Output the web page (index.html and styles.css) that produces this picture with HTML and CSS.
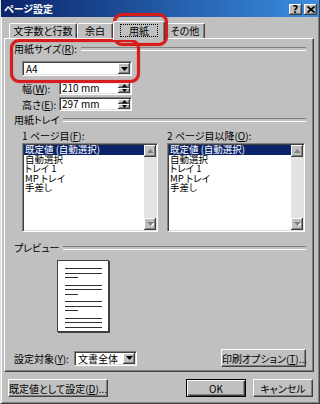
FILE: index.html
```html
<!DOCTYPE html>
<html lang="ja">

<head>
    <meta charset="UTF-8">
    <meta name="viewport" content="width=device-width, initial-scale=1.0">
    <title>ページ設定</title>

    <link rel="stylesheet" href="styles.css">
</head>

<body>
    <div class="dialog">
        <div class="titlebar">
            <span class="title">ページ設定</span>
            <div class="caption-btns">
                <span class="cap-btn">?</span>
                <span class="cap-btn">
                    <svg width="8" height="7" viewBox="0 0 8 7"><path d="M0.5 0.5L7.5 6.5M7.5 0.5L0.5 6.5" stroke="#000" stroke-width="1.7"/></svg>
                </span>
            </div>
        </div>

        <div class="main">
            <div class="tabs">
                <div class="tab tab-chars">文字数と行数</div>
                <div class="tab tab-margin">余白</div>
                <div class="tab tab-paper active"><span class="focus">用紙</span></div>
                <div class="tab tab-other">その他</div>
            </div>

            <div class="panel">
                <!-- 用紙サイズ -->
                <div class="group-head"><span>用紙サイズ(<u>R</u>):</span></div>
                <div class="combo size-combo">
                    <span class="combo-text">A4</span>
                    <span class="drop-btn"><svg width="7" height="4" viewBox="0 0 7 4"><polygon points="0,0 7,0 3.5,4" fill="#000"/></svg></span>
                </div>
                <div class="field field-first">
                    <label>幅(<u>W</u>):</label>
                    <div class="spin">
                        <span class="spin-text">210 mm</span>
                        <span class="spin-btns">
                            <span class="spin-btn"><svg width="5" height="3" viewBox="0 0 5 3"><polygon points="2.5,0 5,3 0,3" fill="#000"/></svg></span>
                            <span class="spin-btn"><svg width="5" height="3" viewBox="0 0 5 3"><polygon points="0,0 5,0 2.5,3" fill="#000"/></svg></span>
                        </span>
                    </div>
                </div>
                <div class="field">
                    <label>高さ(<u>E</u>):</label>
                    <div class="spin">
                        <span class="spin-text">297 mm</span>
                        <span class="spin-btns">
                            <span class="spin-btn"><svg width="5" height="3" viewBox="0 0 5 3"><polygon points="2.5,0 5,3 0,3" fill="#000"/></svg></span>
                            <span class="spin-btn"><svg width="5" height="3" viewBox="0 0 5 3"><polygon points="0,0 5,0 2.5,3" fill="#000"/></svg></span>
                        </span>
                    </div>
                </div>

                <!-- 用紙トレイ -->
                <div class="group-head tray-head"><span>用紙トレイ</span></div>
                <div class="tray">
                    <div class="tray-label">1 ページ目(<u>F</u>):</div>
                    <div class="tray-label">2 ページ目以降(<u>O</u>):</div>
                    <div class="listbox">
                        <div class="items">
                            <div class="item sel">既定値 (自動選択)</div>
                            <div class="item">自動選択</div>
                            <div class="item">トレイ 1</div>
                            <div class="item">MP トレイ</div>
                            <div class="item">手差し</div>
                        </div>
                        <div class="scrollbar">
                            <span class="sb-btn"><svg width="7" height="4" viewBox="0 0 7 4"><polygon points="4.5,1 8,5 1,5" fill="#fff"/><polygon points="3.5,0 7,4 0,4" fill="#808080"/></svg></span>
                            <span class="sb-track"></span>
                            <span class="sb-btn"><svg width="7" height="4" viewBox="0 0 7 4"><polygon points="1,1 8,1 4.5,5" fill="#fff"/><polygon points="0,0 7,0 3.5,4" fill="#808080"/></svg></span>
                        </div>
                    </div>
                    <div class="listbox">
                        <div class="items">
                            <div class="item sel">既定値 (自動選択)</div>
                            <div class="item">自動選択</div>
                            <div class="item">トレイ 1</div>
                            <div class="item">MP トレイ</div>
                            <div class="item">手差し</div>
                        </div>
                        <div class="scrollbar">
                            <span class="sb-btn"><svg width="7" height="4" viewBox="0 0 7 4"><polygon points="4.5,1 8,5 1,5" fill="#fff"/><polygon points="3.5,0 7,4 0,4" fill="#808080"/></svg></span>
                            <span class="sb-track"></span>
                            <span class="sb-btn"><svg width="7" height="4" viewBox="0 0 7 4"><polygon points="1,1 8,1 4.5,5" fill="#fff"/><polygon points="0,0 7,0 3.5,4" fill="#808080"/></svg></span>
                        </div>
                    </div>
                </div>

                <!-- プレビュー -->
                <div class="group-head preview-head"><span>プレビュー</span></div>
                <div class="page">
                    <div class="para"><span class="line"></span><span class="line"></span><span class="line short"></span></div>
                    <div class="para"><span class="line"></span><span class="line"></span><span class="line short"></span></div>
                    <div class="para"><span class="line"></span><span class="line"></span><span class="line short"></span></div>
                    <div class="para"><span class="line"></span><span class="line"></span><span class="line"></span></div>
                </div>

                <div class="apply-row">
                    <span class="apply-label">設定対象(<u>Y</u>):</span>
                    <div class="combo apply-combo">
                        <span class="combo-text">文書全体</span>
                        <span class="drop-btn"><svg width="7" height="4" viewBox="0 0 7 4"><polygon points="0,0 7,0 3.5,4" fill="#000"/></svg></span>
                    </div>
                    <button type="button" class="btn print-btn">印刷オプション(<u>T</u>)...</button>
                </div>
            </div>

            <div class="footer">
                <button type="button" class="btn default-set">既定値として設定(<u>D</u>)...</button>
                <button type="button" class="btn ok-btn">OK</button>
                <button type="button" class="btn cancel-btn">キャンセル</button>
            </div>
        </div>

        <div class="mark mark-tab"></div>
        <div class="mark mark-size"></div>
    </div>
</body>

</html>
```

FILE: styles.css
```css
* {
    box-sizing: border-box;
}

body {
    margin: 0;
    background: #c0c0c0;
    font-family: "Noto Sans CJK JP", "Noto Sans", sans-serif;
    font-size: 10px;
    font-feature-settings: "palt";
    color: #000;
}

u {
    text-decoration-thickness: 1px;
    text-underline-offset: 1px;
}

.dialog {
    position: relative;
    width: 320px;
    height: 404px;
    background: #c0c0c0;
    border-left: 1px solid #dfdfdf;
    border-right: 1px solid #404040;
    border-bottom: 1px solid #404040;
    box-shadow: inset 1px 0 #fff, inset -1px -1px #808080;
}

/* タイトルバー */
.titlebar {
    height: 17px;
    display: flex;
    align-items: center;
    justify-content: space-between;
    padding: 1px 2px 0 3px;
    background: linear-gradient(90deg, #0a246a, #3a8ee0);
    color: #fff;
    font-weight: bold;
    line-height: 16px;
}

.caption-btns {
    display: flex;
    gap: 2px;
}

.cap-btn {
    width: 13px;
    height: 11px;
    display: flex;
    align-items: center;
    justify-content: center;
    background: #c0c0c0;
    color: #000;
    font-family: "DejaVu Sans", sans-serif;
    font-size: 10px;
    font-weight: bold;
    line-height: 11px;
    box-shadow: inset -1px -1px #404040, inset 1px 1px #fff, inset -2px -2px #808080;
}

.main {
    padding: 0 5px 0 3px;
}

/* タブ */
.tabs {
    display: flex;
    align-items: flex-end;
    height: 21px;
    padding-left: 5px;
}

.tab {
    height: 15px;
    border: 1px solid;
    border-color: #fff #404040 transparent #fff;
    border-bottom: none;
    border-radius: 2px 2px 0 0;
    box-shadow: inset -1px 0 #808080;
    text-align: center;
    line-height: 13px;
    white-space: nowrap;
}

.tab-chars { width: 68px; }
.tab-margin { width: 36px; }
.tab-paper { width: 52px; }
.tab-other { width: 40px; }

.tab.active {
    height: 19px;
    margin-bottom: -2px;
    position: relative;
    z-index: 1;
    background: #c0c0c0;
    padding-top: 2px;
}

.focus {
    display: inline-block;
    height: 13px;
    padding: 0 8px;
    border: 1px dotted #000;
    line-height: 11px;
}

/* タブパネル */
.panel {
    height: 334px;
    border: 1px solid;
    border-color: #fff #404040 #404040 #fff;
    box-shadow: inset -1px -1px #808080;
    padding: 4px 7px 0 9px;
}

.group-head {
    display: flex;
    align-items: center;
    height: 12px;
    line-height: 12px;
    white-space: nowrap;
}

.group-head::after {
    content: "";
    flex: 1;
    height: 2px;
    margin-left: 4px;
    border-top: 1px solid #808080;
    border-bottom: 1px solid #fff;
}

.combo {
    display: flex;
    height: 15px;
    padding: 1px;
    background: #fff;
    border: 1px solid;
    border-color: #808080 #fff #fff #808080;
    box-shadow: inset 1px 1px #404040, inset -1px -1px #dfdfdf;
}

.combo-text {
    flex: 1;
    padding-left: 2px;
    line-height: 11px;
    white-space: nowrap;
}

.drop-btn,
.spin-btn,
.sb-btn {
    display: flex;
    align-items: center;
    justify-content: center;
    background: #c0c0c0;
    box-shadow: inset -1px -1px #404040, inset 1px 1px #fff, inset -2px -2px #808080;
}

.drop-btn {
    width: 12px;
}

.size-combo {
    width: 110px;
    margin: 6px 0 0 8px;
}

.field {
    display: flex;
    align-items: center;
    height: 14px;
    margin: 2px 0 0 8px;
}

.field-first {
    margin-top: 5px;
}

.field label {
    width: 37px;
    white-space: nowrap;
}

.spin {
    display: flex;
    width: 73px;
    height: 14px;
    padding: 1px;
    background: #fff;
    border: 1px solid;
    border-color: #808080 #fff #fff #808080;
    box-shadow: inset 1px 1px #404040, inset -1px -1px #dfdfdf;
}

.spin-text {
    flex: 1;
    padding-left: 1px;
    line-height: 10px;
}

.spin-btns {
    display: flex;
    flex-direction: column;
    width: 12px;
}

.spin-btn {
    flex: 1;
}

/* 用紙トレイ */
.tray-head {
    margin-top: 3px;
}

.tray {
    display: grid;
    grid-template-columns: 136px 138px;
    column-gap: 9px;
    margin: 4px 0 0 8px;
}

.tray-label {
    height: 13px;
    line-height: 12px;
    white-space: nowrap;
}

.listbox {
    display: flex;
    height: 89px;
    padding: 1px;
    background: #fff;
    border: 1px solid;
    border-color: #808080 #fff #fff #808080;
    box-shadow: inset 1px 1px #404040, inset -1px -1px #dfdfdf;
}

.items {
    flex: 1;
    font-size: 9.5px;
    line-height: 9.6px;
}

.item {
    padding-left: 1px;
    white-space: nowrap;
}

.item.sel {
    background: #0a246a;
    color: #fff;
}

.scrollbar {
    display: flex;
    flex-direction: column;
    width: 12px;
}

.sb-btn {
    height: 12px;
}

.sb-track {
    flex: 1;
    background: #e3e3e3;
}

/* プレビュー */
.preview-head {
    margin-top: 10px;
}

.page {
    width: 52px;
    height: 72px;
    margin: 6px 0 0 43px;
    padding: 7px 6px 0 7px;
    background: #fff;
    border: 1px solid #404040;
    box-shadow: 1px 1px #404040;
    display: flex;
    flex-direction: column;
    gap: 6.5px;
}

.para {
    display: flex;
    flex-direction: column;
    gap: 3.5px;
}

.line {
    display: block;
    height: 1px;
    background: #303030;
}

.line.short {
    width: 13px;
}

.apply-row {
    display: flex;
    align-items: center;
    height: 18px;
    margin-top: 17px;
}

.apply-label {
    width: 60px;
    white-space: nowrap;
}

.apply-combo {
    width: 63px;
}

/* ボタン */
.btn {
    height: 18px;
    padding: 0;
    background: #c0c0c0;
    border: 1px solid;
    border-color: #fff #404040 #404040 #fff;
    box-shadow: inset -1px -1px #808080;
    font: inherit;
    line-height: 15px;
    text-align: center;
    white-space: nowrap;
    color: #000;
}

.print-btn {
    width: 85px;
    margin-left: auto;
}

.footer {
    display: flex;
    align-items: center;
    padding: 7px 1px 0 4px;
}

.default-set {
    width: 100px;
}

.ok-btn {
    width: 60px;
    margin-left: auto;
    border-color: #000;
    box-shadow: inset 1px 1px #fff, inset -1px -1px #404040, inset -2px -2px #808080;
}

.cancel-btn {
    width: 60px;
    margin-left: 7px;
}

/* 赤い強調枠 */
.mark {
    position: absolute;
    border: 3px solid #d61c1c;
    border-radius: 9px;
    box-shadow: 0 0 1px #d61c1c, inset 0 0 1px #d61c1c;
    pointer-events: none;
}

.mark-tab {
    left: 112px;
    top: 13px;
    width: 55px;
    height: 33px;
}

.mark-size {
    left: 9px;
    top: 39px;
    width: 130px;
    height: 44px;
}
```
